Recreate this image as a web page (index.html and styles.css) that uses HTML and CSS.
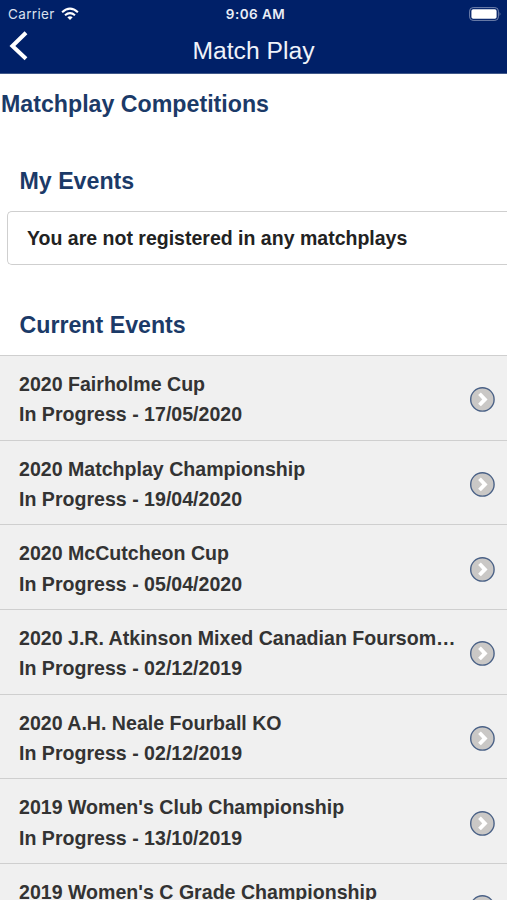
FILE: index.html
```html
<!DOCTYPE html>
<html lang="en">
<head>
<meta charset="utf-8">
<title>Match Play</title>
<link rel="stylesheet" href="styles.css">
</head>
<body>
<svg class="defs" width="0" height="0" aria-hidden="true">
  <symbol id="go" viewBox="0 0 26 26">
    <circle cx="13.4" cy="13.4" r="11.7" fill="#cac8c6" stroke="#4a6186" stroke-width="1.4"/>
    <path d="M10.5 7.8 L15.9 13.4 L10.5 19" fill="none" stroke="#fff" stroke-width="3.8"/>
  </symbol>
</svg>
<header class="top">
  <div class="status">
    <div class="carrier"><span>Carrier</span>
      <svg width="18" height="14" viewBox="0 0 18 14" fill="none" stroke="#fff" stroke-width="2.1">
        <path d="M1.1 5.2 Q9 -1.8 16.9 5.2"/>
        <path d="M4 8.2 Q9 3.9 14 8.2"/>
        <path d="M9 13 L6.3 10.3 Q9 8.2 11.7 10.3 Z" fill="#fff" stroke="none"/>
      </svg>
    </div>
    <span class="clock">9:06 AM</span>
    <svg class="battery" width="33" height="14" viewBox="0 0 33 14">
      <rect x=".6" y=".6" width="28.8" height="12.8" rx="3.5" fill="none" stroke="#7283ad" stroke-width="1"/>
      <rect x="2.4" y="2.3" width="25.2" height="9.4" rx="1.8" fill="#fff"/>
      <path d="M30.6 4.8 Q32.4 7 30.6 9.2 Z" fill="#7283ad"/>
    </svg>
  </div>
  <div class="nav">
    <svg class="back" width="20" height="30" viewBox="0 0 20 30"><path d="M18 1.8 L4.4 15 L18 27.8" fill="none" stroke="#fff" stroke-width="4"/></svg>
    <h1>Match Play</h1>
  </div>
</header>
<main>
  <h2 class="page-title">Matchplay Competitions</h2>
  <h2 class="section mine">My Events</h2>
  <div class="notice">You are not registered in any matchplays</div>
  <h2 class="section current">Current Events</h2>
  <ul class="events">
    <li><div class="info"><p>2020 Fairholme Cup</p><p>In Progress - 17/05/2020</p></div><svg class="go"><use href="#go"/></svg></li>
    <li><div class="info"><p>2020 Matchplay Championship</p><p>In Progress - 19/04/2020</p></div><svg class="go"><use href="#go"/></svg></li>
    <li><div class="info"><p>2020 McCutcheon Cup</p><p>In Progress - 05/04/2020</p></div><svg class="go"><use href="#go"/></svg></li>
    <li><div class="info"><p>2020 J.R. Atkinson Mixed Canadian Foursomes</p><p>In Progress - 02/12/2019</p></div><svg class="go"><use href="#go"/></svg></li>
    <li><div class="info"><p>2020 A.H. Neale Fourball KO</p><p>In Progress - 02/12/2019</p></div><svg class="go"><use href="#go"/></svg></li>
    <li><div class="info"><p>2019 Women's Club Championship</p><p>In Progress - 13/10/2019</p></div><svg class="go"><use href="#go"/></svg></li>
    <li class="last"><div class="info"><p>2019 Women's C Grade Championship</p></div><svg class="go"><use href="#go"/></svg></li>
  </ul>
</main>
</body>
</html>
```
FILE: styles.css
```css
* { box-sizing: border-box; }
html, body { height: 100%; }
body {
  margin: 0;
  height: 900px;
  overflow: hidden;
  display: flex;
  flex-direction: column;
  background: #fff;
  font-family: "Liberation Sans", Arial, sans-serif;
}
h1, h2, p, ul { margin: 0; padding: 0; }
svg { display: block; flex: none; }
.defs { position: absolute; }
.top {
  flex: none;
  height: 74px;
  background: #002068;
  border-bottom: 1px solid #405889;
  color: #fff;
}
.status {
  display: grid;
  grid-template-columns: 1fr auto 1fr;
  align-items: center;
  height: 27px;
  padding: 0 5px 0 8px;
  font: 400 13.5px/27px Inter, sans-serif;
}
.carrier { display: flex; align-items: center; gap: 6px; letter-spacing: .35px; color: #dbe1ee; }
.clock { padding: 1px 0 0 1px; font-weight: 600; letter-spacing: .45px; color: #e9edf6; }
.carrier span { padding-top: 1px; }
.battery { justify-self: end; }
.nav {
  display: grid;
  grid-template-columns: 40px 1fr 40px;
  height: 46px;
  padding-top: 4px;
}
.back { margin-left: 8px; }
.nav h1 { font-weight: 400; font-size: 24.7px; line-height: 39px; text-align: center; color: #eef2fa; }
main { flex: none; }
.page-title, .section { font-size: 23.2px; line-height: 30px; color: #1b3a68; }
.page-title { margin: 15px 0 0 1px; }
.section { margin-left: 19.5px; }
.mine { margin-top: 47px; }
.notice {
  height: 54px;
  margin: 15px 0 0 7px;
  padding-left: 19px;
  border: 1px solid #cfcfcf;
  border-right: 0;
  border-radius: 5px 0 0 5px;
  font-size: 19.53px;
  font-weight: 700;
  line-height: 53px;
  color: #222;
}
.current { margin-top: 45px; }
.events { margin-top: 15px; list-style: none; }
.events li {
  display: flex;
  align-items: center;
  justify-content: space-between;
  height: 84.7px;
  padding: 3px 12px 0 19px;
  border-top: 1px solid #cfcfcf;
  background: #f0f0f0;
}
.events .last { height: 37px; align-items: flex-start; padding-top: 13px; overflow: hidden; }
.last .go { margin-top: 17px; }
.info { width: 438px; font-size: 19.58px; font-weight: 700; line-height: 30.5px; color: #333; }
.info p { overflow: hidden; white-space: nowrap; text-overflow: ellipsis; }
.go { width: 26px; height: 26px; }
```
